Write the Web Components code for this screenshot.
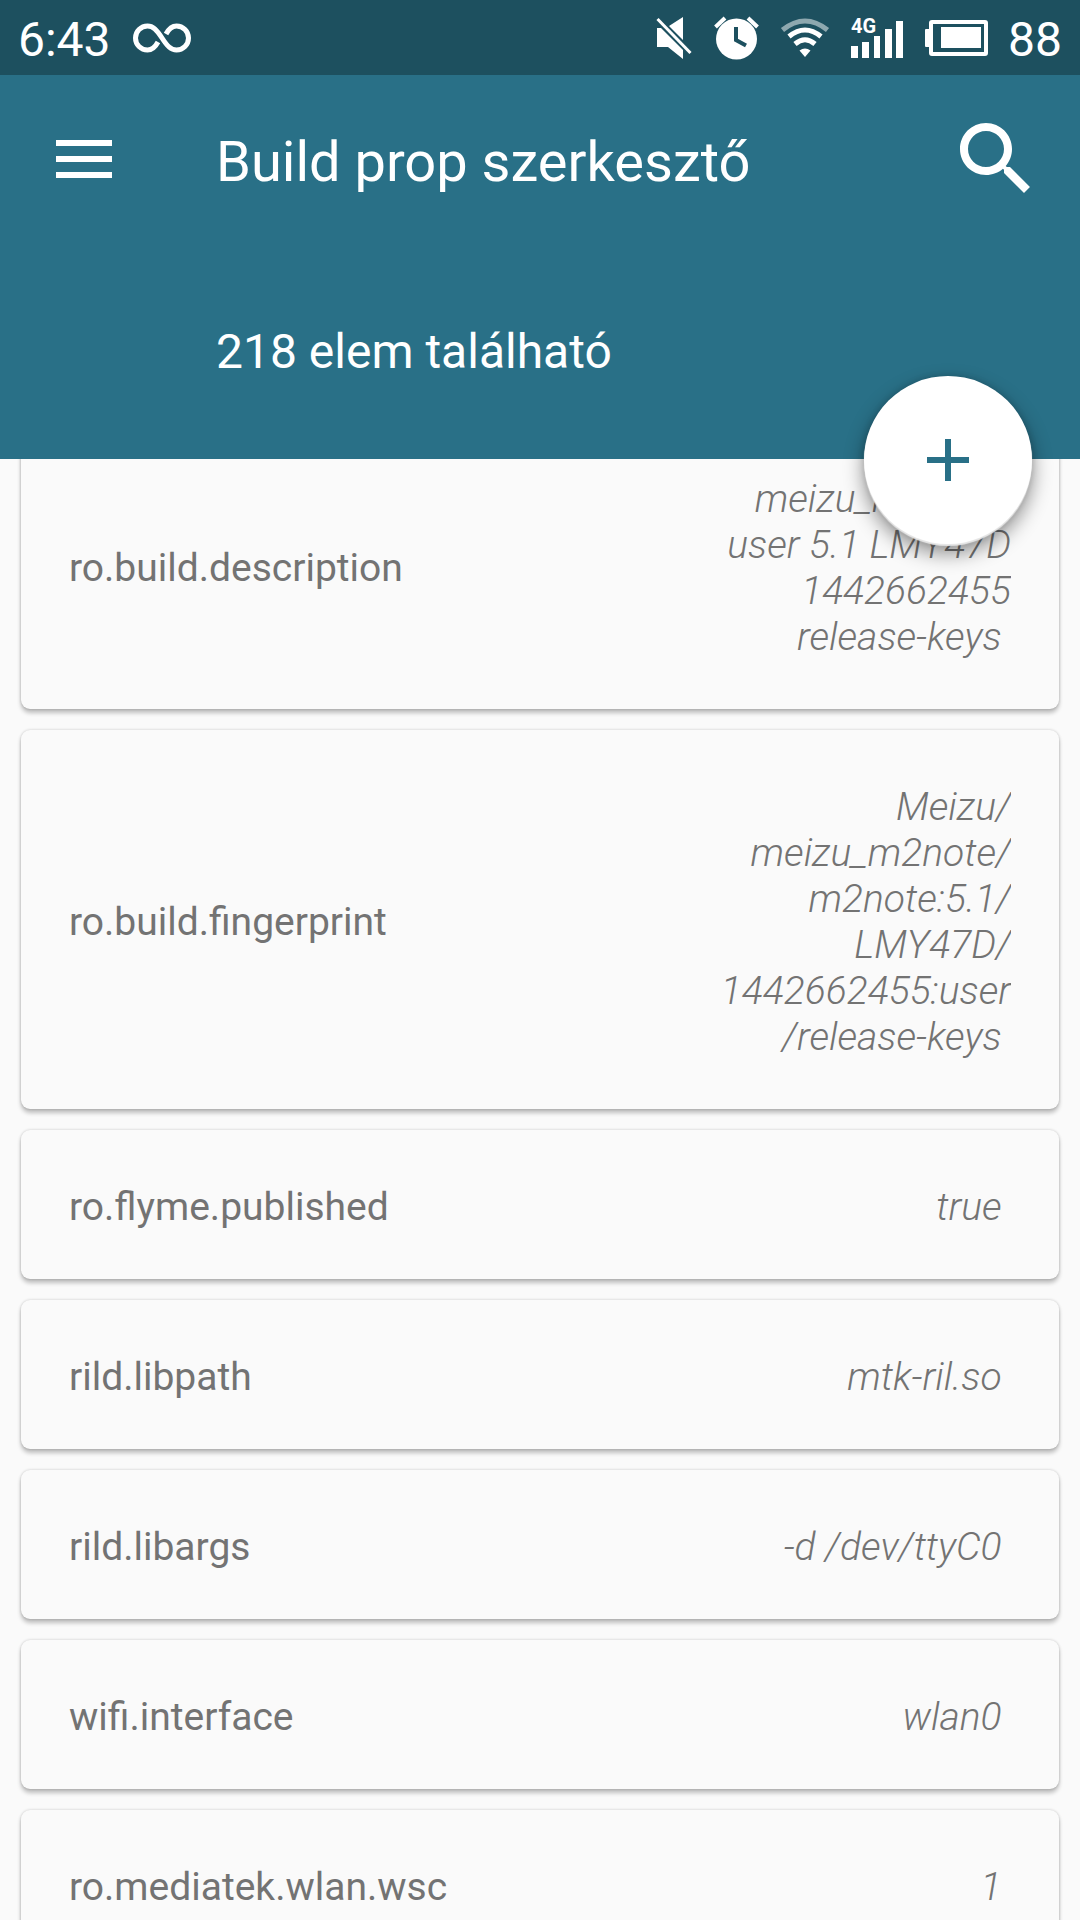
<!DOCTYPE html>
<html lang="hu">
<head>
    <meta charset="UTF-8">
    <meta name="viewport" content="width=device-width, initial-scale=1">
    <title>Build prop szerkesztő</title>
    <style>
        body {
            margin: 0;
            background: #fafafa;
            font-family: Roboto, "Noto Sans", sans-serif;
        }
    </style>
</head>
<body>
    <prop-app>
        <status-bar slot="status" time="6:43" battery="88"></status-bar>
        <app-header slot="header">
            Build prop szerkesztő
            <span slot="subtitle">218 elem található</span>
        </app-header>
        <prop-list scroll-from="58">
            <prop-card name="ro.build.description">meizu_m2note-<wbr>user 5.1 LMY47D 1442662455 release-keys&nbsp;</prop-card>
            <prop-card name="ro.build.fingerprint">Meizu/<wbr>meizu_m2note/<wbr>m2note:5.1/<wbr>LMY47D/<wbr>1442662455:user<wbr>/release-keys&nbsp;</prop-card>
            <prop-card name="ro.flyme.published">true&nbsp;</prop-card>
            <prop-card name="rild.libpath">mtk-ril.so&nbsp;</prop-card>
            <prop-card name="rild.libargs">-d /dev/ttyC0&nbsp;</prop-card>
            <prop-card name="wifi.interface">wlan0&nbsp;</prop-card>
            <prop-card name="ro.mediatek.wlan.wsc">1&nbsp;</prop-card>
        </prop-list>
    </prop-app>

    <script>
        class PropApp extends HTMLElement {
            constructor(){
                super();
                this.attachShadow({ mode: 'open' });
                this.shadowRoot.innerHTML = `
                    <style>${this._getCSS()}</style>
                    <slot name="status"></slot>
                    <slot name="header"></slot>
                    <slot></slot>
                `;
            }
            _getCSS(){
                return `
                    :host {
                        display: flex;
                        flex-direction: column;
                        height: 100vh;
                        overflow: hidden;
                    }
                `;
            }
        }

        class StatusBar extends HTMLElement {
            constructor(){
                super();
                this.attachShadow({ mode: 'open' });
            }
            connectedCallback(){
                this.shadowRoot.innerHTML = `
                    <style>${this._getCSS()}</style>
                    <span>${this.getAttribute('time')}</span>
                    <svg id="loop" width="58" height="30" viewBox="0 0 58 30" fill="none" stroke="#fff" stroke-width="5">
                        <path d="M25 19C22 24.500 19 27 14.500 27A12 12 0 0 1 14.500 3C20 3 23.500 6.500 29 15C34.500 23.500 38 27 43.500 27A12 12 0 0 0 43.500 3C39 3 36 5.500 33 11"/>
                    </svg>
                    <div id="icons">
                        <svg width="36" height="44" viewBox="0 0 36 44" fill="#fff">
                            <path d="M13 10L27 1V24zM1 12H5L27 34V43L12 31H1z"/>
                            <path d="M1.500 3L34.500 37" stroke="#fff" stroke-width="3"/>
                        </svg>
                        <svg width="45" height="44" viewBox="0 0 45 44">
                            <circle cx="22.500" cy="23" r="20.500" fill="#fff"/>
                            <path d="M1.500 11L11 2M43.500 11L34 2" stroke="#fff" stroke-width="4"/>
                            <path d="M22 11V24L32 29.500" fill="none" stroke="#1d505f" stroke-width="4"/>
                        </svg>
                        <svg width="48" height="40" viewBox="0 0 48 40" fill="none" stroke="#fff" stroke-width="5">
                            <path d="M1.500 12Q24 -6 46.500 12" stroke-opacity=".5"/>
                            <path d="M8 18.500Q24 5.500 40 18.500"/>
                            <path d="M14 26Q24 17.500 34 26"/>
                            <path d="M18.500 32.500Q24 28.500 29.500 32.500L24 39z" fill="#fff" stroke="none"/>
                        </svg>
                        <svg id="signal" width="52" height="56" viewBox="0 0 52 56" fill="#fff">
                            <text x="0" y="23" font-size="20" font-weight="700">4G</text>
                            <path d="M0 36h7v12H0zM11 32h7v16h-7zM23 26h6v22h-6zM34 19h7v29h-7zM45 11h7v37h-7z"/>
                        </svg>
                        <svg id="battery" width="63" height="36" viewBox="0 0 63 36">
                            <rect x="6" y="2" width="55" height="32" rx="1" fill="none" stroke="#fff" stroke-width="4"/>
                            <path d="M16 7H56V28H16zM1 9H5V27H1Q0 27 0 26V10Q0 9 1 9z" fill="#fff"/>
                        </svg>
                    </div>
                    <span>${this.getAttribute('battery')}</span>
                `;
            }
            _getCSS(){
                return `
                    :host {
                        display: flex;
                        align-items: center;
                        height: 75px;
                        padding: 0 18px;
                        flex: none;
                        box-sizing: border-box;
                        background: #1d505f;
                        color: #fff;
                        font-size: 48px;
                        line-height: 56px;
                    }
                    span { padding-top: 4px; }
                    svg {
                        display: block;
                        overflow: visible;
                    }
                    #loop { margin-left: 22px; }
                    #icons {
                        display: flex;
                        align-items: center;
                        gap: 22px;
                        margin: 0 20px 0 auto;
                    }
                `;
            }
        }

        class AppHeader extends HTMLElement {
            constructor(){
                super();
                this.attachShadow({ mode: 'open' });
                this.shadowRoot.innerHTML = `
                    <style>${this._getCSS()}</style>
                    <header>
                        <nav>
                            <button id="menu" aria-label="Menü">
                                <svg width="56" height="38" viewBox="0 0 56 38" fill="#fff">
                                    <path d="M0 0h56v6H0zM0 16h56v6H0zM0 32h56v6H0z"/>
                                </svg>
                            </button>
                            <h1><slot></slot></h1>
                            <button id="search" aria-label="Keresés">
                                <svg width="96" height="96" viewBox="0 0 24 24" fill="#fff">
                                    <path d="M15.500 14h-.79l-.28-.27C15.410 12.590 16 11.110 16 9.500 16 5.910 13.090 3 9.500 3S3 5.910 3 9.500 5.910 16 9.500 16c1.610 0 3.090-.59 4.230-1.570l.27.28v.79l5 4.990L20.490 19l-4.990-5zm-6 0C7.010 14 5 11.990 5 9.500S7.010 5 9.500 5 14 7.010 14 9.500 11.990 14 9.500 14z"/>
                                </svg>
                            </button>
                        </nav>
                        <p><slot name="subtitle"></slot></p>
                        <button id="add" aria-label="Hozzáadás">
                            <svg width="42" height="42" viewBox="0 0 42 42" fill="#297087">
                                <path d="M18 0h6v18h18v6H24v18h-6V24H0v-6h18z"/>
                            </svg>
                        </button>
                    </header>
                `;
            }
            _getCSS(){
                return `
                    :host {
                        display: block;
                        flex: none;
                        position: relative;
                        z-index: 1;
                        background: #297087;
                        color: #fff;
                    }
                    nav {
                        display: flex;
                        align-items: center;
                        height: 168px;
                        padding: 0 36px 0 56px;
                    }
                    button {
                        display: flex;
                        align-items: center;
                        justify-content: center;
                        padding: 0;
                        border: 0;
                        background: none;
                    }
                    #menu {
                        width: 56px;
                        height: 96px;
                    }
                    h1 {
                        flex: 1;
                        margin: 0 0 0 104px;
                        padding-top: 6px;
                        font-size: 56px;
                        font-weight: 400;
                        line-height: 66px;
                    }
                    p {
                        box-sizing: border-box;
                        height: 216px;
                        margin: 0;
                        padding: 81px 0 0 216px;
                        font-size: 48px;
                        line-height: 56px;
                    }
                    /* Floating button, half over the list */
                    #add {
                        position: absolute;
                        right: 48px;
                        bottom: -85px;
                        width: 168px;
                        height: 168px;
                        border-radius: 50%;
                        background: #fff;
                        box-shadow: 0 2px 1px #e8e8e8, 0 9px 20px rgba(0, 0, 0, .45), 0 0 6px rgba(0, 0, 0, .15);
                    }
                `;
            }
        }

        class PropList extends HTMLElement {
            constructor(){
                super();
                this.attachShadow({ mode: 'open' });
                this.shadowRoot.innerHTML = `
                    <style>${this._getCSS()}</style>
                    <slot></slot>
                `;
            }
            connectedCallback(){
                this.scrollTop = this.getAttribute('scroll-from') ?? 0;
            }
            _getCSS(){
                return `
                    :host {
                        display: flex;
                        flex-direction: column;
                        flex: 1;
                        gap: 21px;
                        min-height: 0;
                        padding: 21px;
                        overflow-y: scroll;
                        scrollbar-width: none;
                    }
                `;
            }
        }

        class PropCard extends HTMLElement {
            constructor(){
                super();
                this.attachShadow({ mode: 'open' });
            }
            connectedCallback(){
                this.shadowRoot.innerHTML = `
                    <style>${this._getCSS()}</style>
                    <span id="name">${this.getAttribute('name')}</span>
                    <span id="value"><slot></slot></span>
                `;
            }
            _getCSS(){
                return `
                    :host {
                        display: flex;
                        align-items: center;
                        justify-content: space-between;
                        flex: none;
                        padding: 54px 48px 49px;
                        border-radius: 9px;
                        background: #fafafa;
                        box-shadow: 0 4px 4px rgba(0, 0, 0, .24), 0 0 3px rgba(0, 0, 0, .2);
                        color: #737373;
                        font-size: 39px;
                        line-height: 46px;
                    }
                    #value {
                        width: 296px;
                        overflow: hidden;
                        font-style: italic;
                        font-weight: 300;
                        text-align: right;
                    }
                `;
            }
        }

        window.customElements.define('prop-card', PropCard);
        window.customElements.define('status-bar', StatusBar);
        window.customElements.define('app-header', AppHeader);
        window.customElements.define('prop-app', PropApp);
        window.customElements.define('prop-list', PropList);
    </script>
</body>
</html>
